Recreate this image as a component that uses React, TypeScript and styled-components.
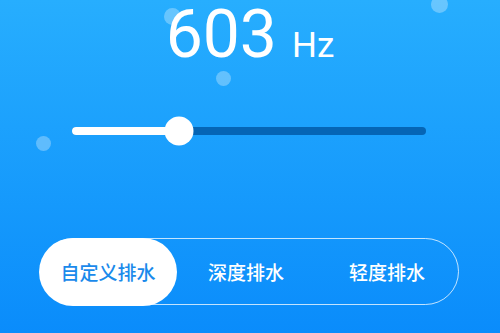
import React from "react";
import styled, { createGlobalStyle } from "styled-components";

const Global = createGlobalStyle`
  html, body { margin: 0; padding: 0; }
  body { font-family: Roboto, "Noto Sans CJK SC", sans-serif; }
`;

const Page = styled.div`
  position: relative;
  width: 500px;
  height: 333px;
  overflow: hidden;
  background: linear-gradient(180deg, #27aefe 0%, #0a8cfb 100%);
  display: flex;
  flex-direction: column;
  align-items: center;
  padding: 2px 2px 0 0;
  box-sizing: border-box;
`;

const Bubble = styled.div<{ $x: number; $y: number; $r: number }>`
  position: absolute;
  left: ${(p) => p.$x - p.$r}px;
  top: ${(p) => p.$y - p.$r}px;
  width: ${(p) => p.$r * 2}px;
  height: ${(p) => p.$r * 2}px;
  border-radius: 50%;
  background: rgba(255, 255, 255, 0.3);
`;

const Reading = styled.div`
  display: flex;
  align-items: baseline;
  gap: 15px;
  color: #fff;
  font-family: Roboto, sans-serif;
  padding-left: 2px;
`;

const Value = styled.span`
  font-size: 66px;
  line-height: 66px;
  font-weight: 400;
`;

const Unit = styled.span`
  font-size: 35px;
  line-height: 35px;
  font-weight: 400;
`;

const Slider = styled.div`
  margin-top: 48px;
  width: 354px;
  height: 30px;
  display: flex;
  align-items: center;
`;

const Track = styled.div`
  position: relative;
  width: 100%;
  height: 8px;
  border-radius: 4px;
  background: #0565b5;
`;

const Fill = styled.div`
  position: absolute;
  left: 0;
  top: 0;
  height: 100%;
  border-radius: 4px;
  background: #fff;
`;

const Thumb = styled.div`
  position: absolute;
  top: 50%;
  width: 29px;
  height: 29px;
  transform: translate(-50%, -50%);
  border-radius: 50%;
  background: #fff;
`;

const Segmented = styled.div`
  margin-top: 92px;
  width: 419px;
  height: 67px;
  box-sizing: border-box;
  border: 1.5px solid rgba(255, 255, 255, 0.75);
  border-radius: 34px;
  display: grid;
  grid-template-columns: 135px 1fr 1fr;
`;

const Segment = styled.div<{ $active?: boolean }>`
  margin: -1.5px;
  border-radius: 34px;
  display: flex;
  align-items: center;
  justify-content: center;
  font-family: "Noto Sans CJK SC", sans-serif;
  font-size: 19px;
  font-weight: 500;
  color: ${(p) => (p.$active ? "#1a8aeb" : "#ffffff")};
  background: ${(p) => (p.$active ? "#ffffff" : "transparent")};
`;

export default function App() {
  const min = 0;
  const max = 2000;
  const value = 603;
  const pct = ((value - min) / (max - min)) * 100;
  return (
    <>
      <Global />
      <Page>
        <Bubble $x={172} $y={16} $r={8.5} />
        <Bubble $x={439} $y={4} $r={8.5} />
        <Bubble $x={223} $y={78} $r={7.5} />
        <Bubble $x={43} $y={143} $r={7.5} />
        <Reading>
          <Value>{value}</Value>
          <Unit>Hz</Unit>
        </Reading>
        <Slider>
          <Track>
            <Fill style={{ width: `${pct}%` }} />
            <Thumb style={{ left: `${pct}%` }} />
          </Track>
        </Slider>
        <Segmented>
          <Segment $active>自定义排水</Segment>
          <Segment>深度排水</Segment>
          <Segment>轻度排水</Segment>
        </Segmented>
      </Page>
    </>
  );
}
